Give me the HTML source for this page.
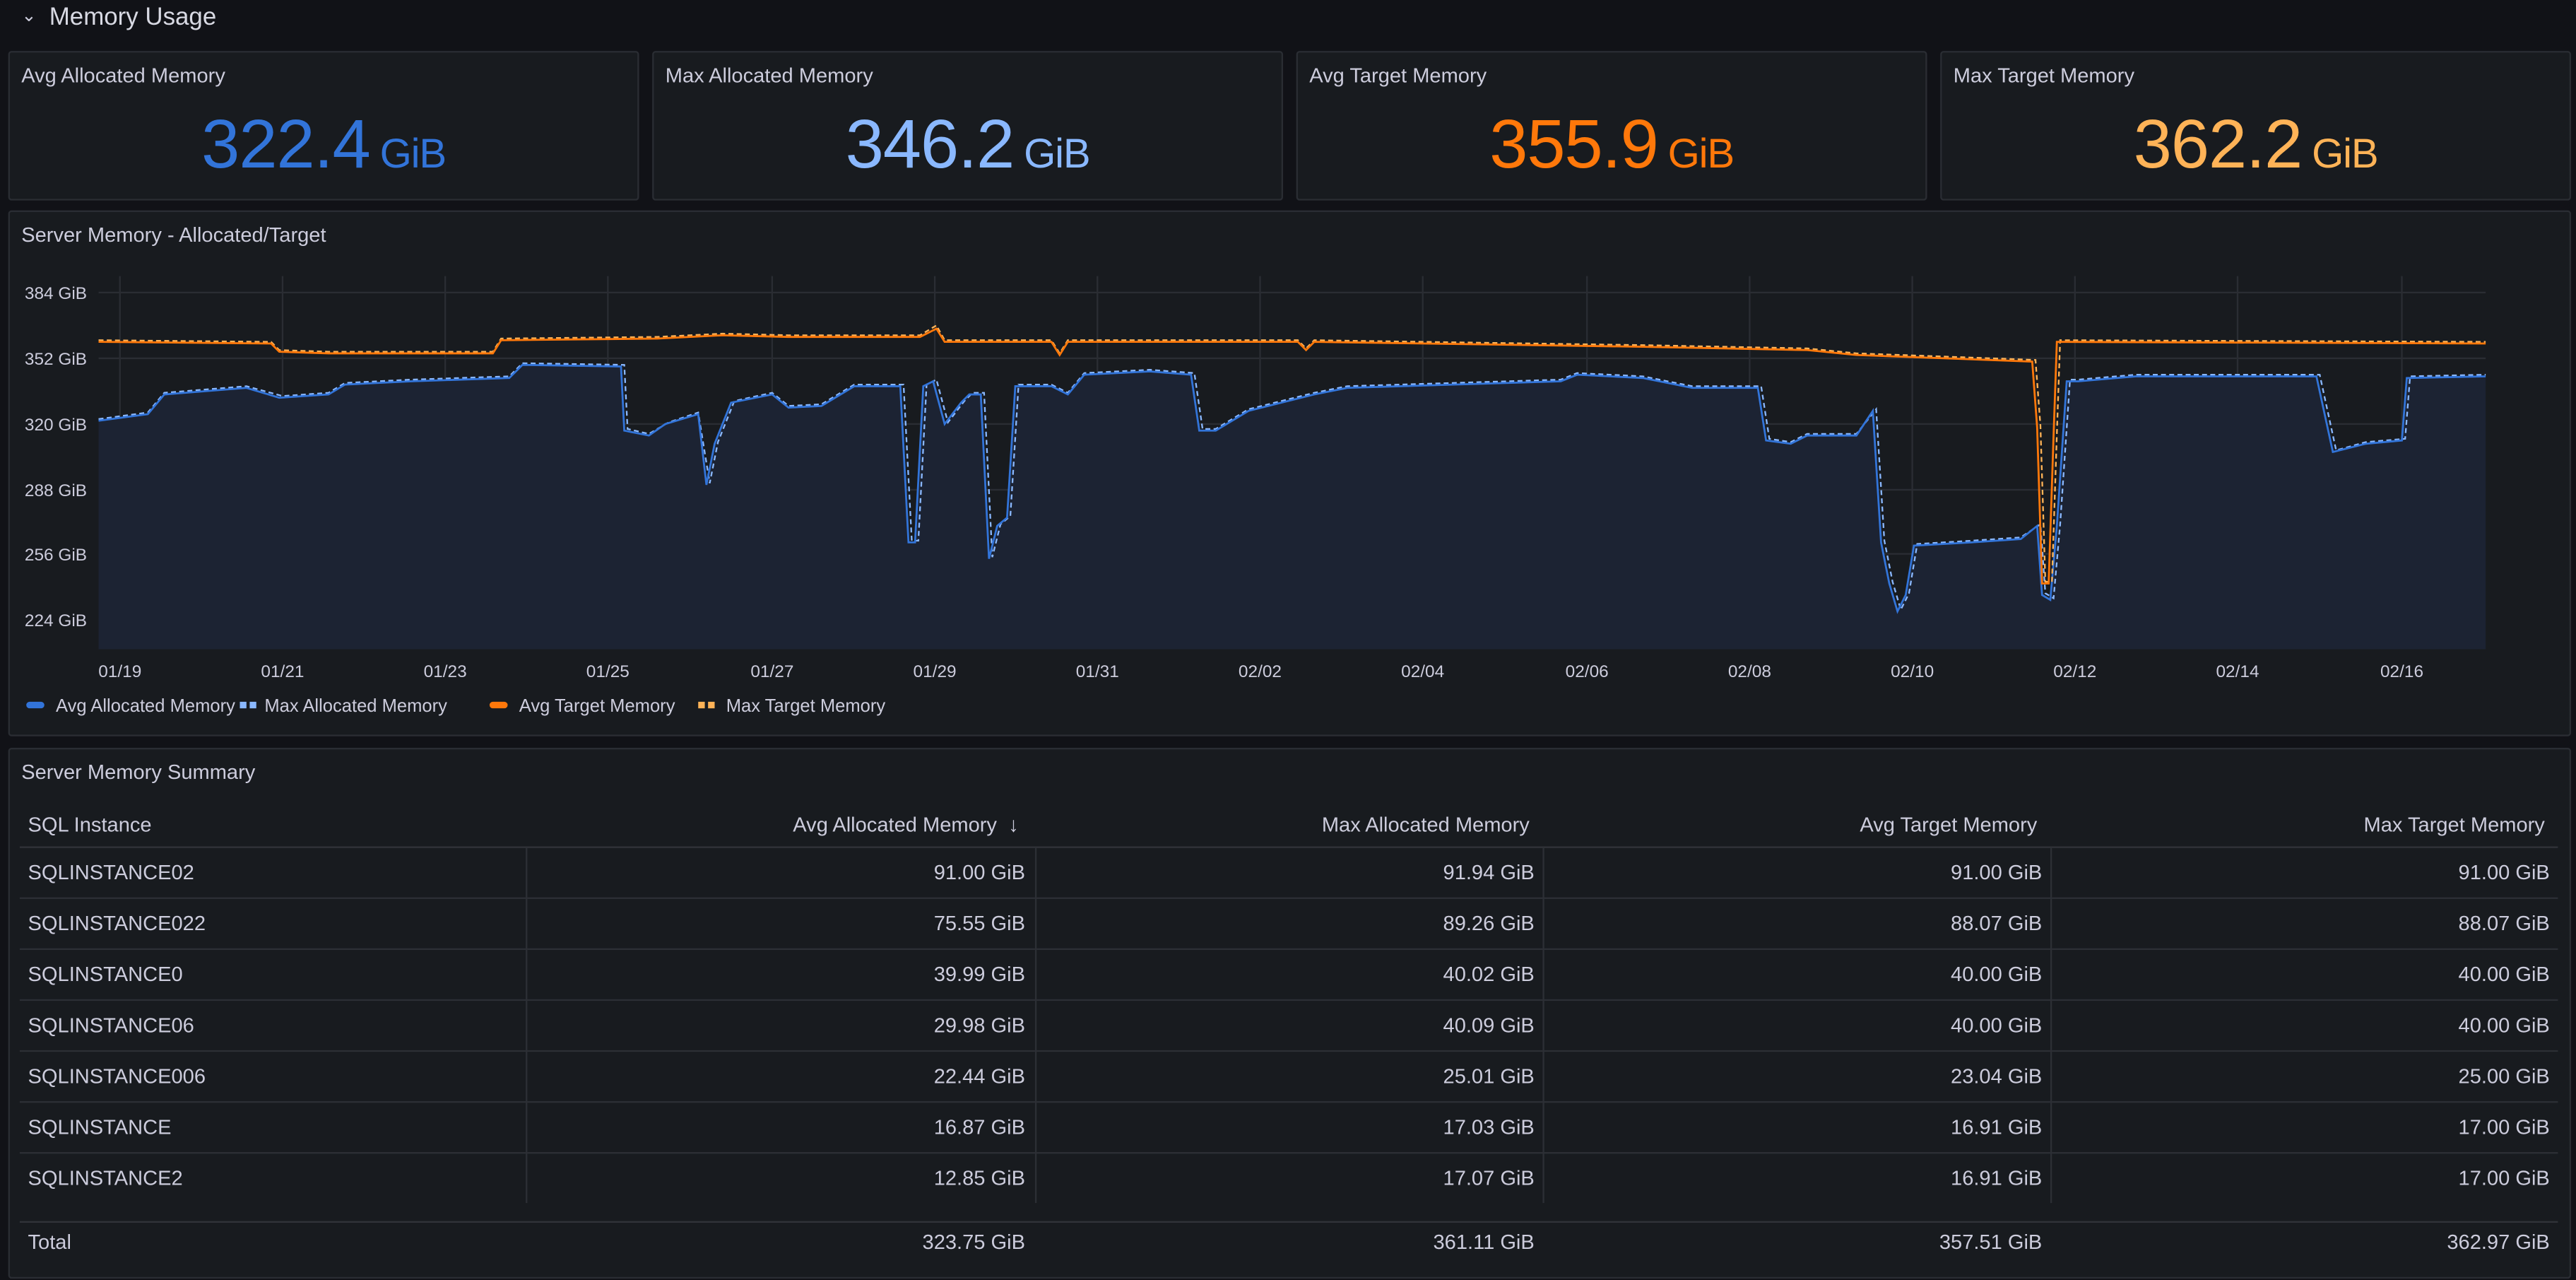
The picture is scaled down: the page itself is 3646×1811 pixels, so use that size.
<!DOCTYPE html>
<html><head><meta charset="utf-8"><style>
html,body{margin:0;padding:0;background:#111217;overflow:hidden;width:3646px;height:1811px}
#w{position:absolute;left:0;top:0;width:1568px;height:779px;transform:scale(2.32526);transform-origin:0 0;font-family:"Liberation Sans",sans-serif;color:#ccccdc}
.a{position:absolute;white-space:nowrap}
.p{position:absolute;background:#181b1f;border:1px solid #2a2d33;border-radius:2px;box-sizing:border-box}
.t{position:absolute;left:7px;top:7px;font-size:12.5px;color:#ccccdc}
.v{position:absolute;left:0;right:0;top:32px;text-align:center;font-size:42px;letter-spacing:-0.5px}
.v small{font-size:25px;margin-left:6px}
.r{position:absolute;font-size:12.5px;text-align:right}
.hl{position:absolute;height:1px;background:#2c2f35}
.vl{position:absolute;width:1px;background:#2c2f35}
</style></head><body><div id="w">
<div class="a" style="left:13px;top:3px;font-size:11px">&#8964;</div>
<div class="a" style="left:30px;top:2px;font-size:15px;color:#d8d9e3">Memory Usage</div>

<div class="p" style="left:5px;top:31px;width:384px;height:91px"><div class="t">Avg Allocated Memory</div><div class="v" style="color:#3274d9">322.4<small>GiB</small></div></div>
<div class="p" style="left:397px;top:31px;width:384px;height:91px"><div class="t">Max Allocated Memory</div><div class="v" style="color:#8ab8ff">346.2<small>GiB</small></div></div>
<div class="p" style="left:789px;top:31px;width:384px;height:91px"><div class="t">Avg Target Memory</div><div class="v" style="color:#ff780a">355.9<small>GiB</small></div></div>
<div class="p" style="left:1181px;top:31px;width:384px;height:91px"><div class="t">Max Target Memory</div><div class="v" style="color:#ffb357">362.2<small>GiB</small></div></div>

<div class="p" style="left:5px;top:128px;width:1560px;height:320px"><div class="t">Server Memory - Allocated/Target</div></div>
<svg class="a" style="left:0;top:0" width="1568" height="779" viewBox="0 0 1568 779">
<g stroke="#2a2d33" stroke-width="1">
<line x1="60" x2="1513" y1="178" y2="178"/><line x1="60" x2="1513" y1="218" y2="218"/><line x1="60" x2="1513" y1="258" y2="258"/><line x1="60" x2="1513" y1="298" y2="298"/><line x1="60" x2="1513" y1="337" y2="337"/><line x1="60" x2="1513" y1="377" y2="377"/>
<line x1="73" x2="73" y1="168" y2="395"/><line x1="172" x2="172" y1="168" y2="395"/><line x1="271" x2="271" y1="168" y2="395"/><line x1="370" x2="370" y1="168" y2="395"/><line x1="470" x2="470" y1="168" y2="395"/><line x1="569" x2="569" y1="168" y2="395"/><line x1="668" x2="668" y1="168" y2="395"/><line x1="767" x2="767" y1="168" y2="395"/><line x1="866" x2="866" y1="168" y2="395"/><line x1="966" x2="966" y1="168" y2="395"/><line x1="1065" x2="1065" y1="168" y2="395"/><line x1="1164" x2="1164" y1="168" y2="395"/><line x1="1263" x2="1263" y1="168" y2="395"/><line x1="1362" x2="1362" y1="168" y2="395"/><line x1="1462" x2="1462" y1="168" y2="395"/>
</g>
<g font-family="Liberation Sans,sans-serif" font-size="10.5" fill="#ccccdc">
<text x="15" y="182">384 GiB</text><text x="15" y="222">352 GiB</text><text x="15" y="262">320 GiB</text><text x="15" y="302">288 GiB</text><text x="15" y="341">256 GiB</text><text x="15" y="381">224 GiB</text>
<g text-anchor="middle"><text x="73" y="412">01/19</text><text x="172" y="412">01/21</text><text x="271" y="412">01/23</text><text x="370" y="412">01/25</text><text x="470" y="412">01/27</text><text x="569" y="412">01/29</text><text x="668" y="412">01/31</text><text x="767" y="412">02/02</text><text x="866" y="412">02/04</text><text x="966" y="412">02/06</text><text x="1065" y="412">02/08</text><text x="1164" y="412">02/10</text><text x="1263" y="412">02/12</text><text x="1362" y="412">02/14</text><text x="1462" y="412">02/16</text></g>
</g>
<polygon fill="#1c2333" points="60,256 90,252 100,240 150,236 170,242 200,240 210,234 250,232 310,230 318,222 378,223 380,262 395,265 405,258 425,252 430,295 435,270 445,245 470,240 480,248 500,247 520,235 548,235 553,330 557,330 562,235 568,232 575,258 585,245 590,240 597,240 602,340 607,320 613,315 618,235 640,235 650,240 660,228 700,226 725,228 730,262 740,262 760,250 800,240 820,236 950,232 960,228 1000,230 1030,236 1070,236 1075,268 1090,270 1100,265 1130,265 1140,250 1145,330 1150,355 1155,372 1160,362 1165,332 1200,330 1230,328 1240,320 1243,362 1248,365 1252,320 1258,232 1265,232 1300,229 1410,229 1420,275 1440,270 1462,268 1465,230 1513,229 1513,395 60,395"/>
<polyline fill="none" stroke="#8ab8ff" stroke-width="1" stroke-dasharray="3,2" points="60,255 90,251 100,239 150,235 172,241 200,239 210,233 250,231 310,229 318,221 380,222 382,261 395,264 407,257 425,251 432,294 437,269 447,244 470,239 480,247 500,246 520,234 550,234 555,329 559,329 564,234 570,231 577,257 587,244 592,239 599,239 604,339 609,319 615,314 620,234 640,234 650,239 660,227 700,225 727,227 732,261 740,261 760,249 800,239 820,235 950,231 960,227 1000,229 1030,235 1072,235 1077,267 1090,269 1100,264 1130,264 1142,249 1147,329 1152,354 1157,371 1162,361 1167,331 1200,329 1230,327 1242,319 1245,361 1250,364 1254,319 1260,231 1265,231 1300,228 1412,228 1422,274 1440,269 1464,267 1467,229 1513,228"/>
<polyline fill="none" stroke="#3274d9" stroke-width="1.2" points="60,256 90,252 100,240 150,236 170,242 200,240 210,234 250,232 310,230 318,222 378,223 380,262 395,265 405,258 425,252 430,295 435,270 445,245 470,240 480,248 500,247 520,235 548,235 553,330 557,330 562,235 568,232 575,258 585,245 590,240 597,240 602,340 607,320 613,315 618,235 640,235 650,240 660,228 700,226 725,228 730,262 740,262 760,250 800,240 820,236 950,232 960,228 1000,230 1030,236 1070,236 1075,268 1090,270 1100,265 1130,265 1140,250 1145,330 1150,355 1155,372 1160,362 1165,332 1200,330 1230,328 1240,320 1243,362 1248,365 1252,320 1258,232 1265,232 1300,229 1410,229 1420,275 1440,270 1462,268 1465,230 1513,229"/>
<polyline fill="none" stroke="#ffb357" stroke-width="1" stroke-dasharray="3,2" points="60,207 165,208 170,213 200,214 300,214 305,206 400,205 440,203 480,204 560,204 570,198 575,207 640,207 645,215 650,207 790,207 795,212 800,207 1000,210 1100,212 1130,215 1239,219 1242,259 1245,354 1249,354 1252,264 1254,207 1513,208"/>
<polyline fill="none" stroke="#ff780a" stroke-width="1.2" points="60,208 165,209 170,214 200,215 300,215 305,207 400,206 440,204 480,205 560,205 570,200 575,208 640,208 645,216 650,208 790,208 795,213 800,208 1000,211 1100,213 1130,216 1237,220 1240,260 1243,355 1247,355 1250,265 1252,208 1513,209"/>
<g font-family="Liberation Sans,sans-serif" font-size="11" fill="#ccccdc">
<rect x="16" y="427" width="11" height="4" rx="2" fill="#3274d9"/><text x="34" y="433">Avg Allocated Memory</text>
<rect x="146" y="427" width="4" height="4" fill="#8ab8ff"/><rect x="152" y="427" width="4" height="4" fill="#8ab8ff"/><text x="161" y="433">Max Allocated Memory</text>
<rect x="298" y="427" width="11" height="4" rx="2" fill="#ff780a"/><text x="316" y="433">Avg Target Memory</text>
<rect x="425" y="427" width="4" height="4" fill="#ffb357"/><rect x="431" y="427" width="4" height="4" fill="#ffb357"/><text x="442" y="433">Max Target Memory</text>
</g>
</svg>

<div class="p" style="left:5px;top:455px;width:1560px;height:323px"><div class="t">Server Memory Summary</div></div>
<div class="a" style="left:17px;top:495px;font-size:12.5px">SQL Instance</div>
<div class="r" style="right:948px;top:495px">Avg Allocated Memory &nbsp;&#8595;</div>
<div class="r" style="right:637px;top:495px">Max Allocated Memory</div>
<div class="r" style="right:328px;top:495px">Avg Target Memory</div>
<div class="r" style="right:19px;top:495px">Max Target Memory</div>
<div class="hl" style="left:12px;width:1545px;top:515px;background:#303338"></div>
<div class="hl" style="left:12px;width:1545px;top:546px"></div>
<div class="hl" style="left:12px;width:1545px;top:577px"></div>
<div class="hl" style="left:12px;width:1545px;top:608px"></div>
<div class="hl" style="left:12px;width:1545px;top:639px"></div>
<div class="hl" style="left:12px;width:1545px;top:670px"></div>
<div class="hl" style="left:12px;width:1545px;top:701px"></div>
<div class="hl" style="left:12px;width:1545px;top:743px;background:#303338"></div>
<div class="vl" style="left:320px;top:516px;height:216px"></div>
<div class="vl" style="left:630px;top:516px;height:216px"></div>
<div class="vl" style="left:939px;top:516px;height:216px"></div>
<div class="vl" style="left:1248px;top:516px;height:216px"></div>
<div style="position:absolute;left:0;top:516px;width:1568px;font-size:12.5px;line-height:31px">
<div style="position:relative;height:31px"><span class="a" style="left:17px">SQLINSTANCE02</span><span class="r" style="right:944px">91.00 GiB</span><span class="r" style="right:634px">91.94 GiB</span><span class="r" style="right:325px">91.00 GiB</span><span class="r" style="right:16px">91.00 GiB</span></div>
<div style="position:relative;height:31px"><span class="a" style="left:17px">SQLINSTANCE022</span><span class="r" style="right:944px">75.55 GiB</span><span class="r" style="right:634px">89.26 GiB</span><span class="r" style="right:325px">88.07 GiB</span><span class="r" style="right:16px">88.07 GiB</span></div>
<div style="position:relative;height:31px"><span class="a" style="left:17px">SQLINSTANCE0</span><span class="r" style="right:944px">39.99 GiB</span><span class="r" style="right:634px">40.02 GiB</span><span class="r" style="right:325px">40.00 GiB</span><span class="r" style="right:16px">40.00 GiB</span></div>
<div style="position:relative;height:31px"><span class="a" style="left:17px">SQLINSTANCE06</span><span class="r" style="right:944px">29.98 GiB</span><span class="r" style="right:634px">40.09 GiB</span><span class="r" style="right:325px">40.00 GiB</span><span class="r" style="right:16px">40.00 GiB</span></div>
<div style="position:relative;height:31px"><span class="a" style="left:17px">SQLINSTANCE006</span><span class="r" style="right:944px">22.44 GiB</span><span class="r" style="right:634px">25.01 GiB</span><span class="r" style="right:325px">23.04 GiB</span><span class="r" style="right:16px">25.00 GiB</span></div>
<div style="position:relative;height:31px"><span class="a" style="left:17px">SQLINSTANCE</span><span class="r" style="right:944px">16.87 GiB</span><span class="r" style="right:634px">17.03 GiB</span><span class="r" style="right:325px">16.91 GiB</span><span class="r" style="right:16px">17.00 GiB</span></div>
<div style="position:relative;height:31px"><span class="a" style="left:17px">SQLINSTANCE2</span><span class="r" style="right:944px">12.85 GiB</span><span class="r" style="right:634px">17.07 GiB</span><span class="r" style="right:325px">16.91 GiB</span><span class="r" style="right:16px">17.00 GiB</span></div>
</div>
<div style="position:absolute;left:0;top:741px;width:1568px;height:31px;font-size:12.5px;line-height:31px">
<span class="a" style="left:17px">Total</span><span class="r" style="right:944px">323.75 GiB</span><span class="r" style="right:634px">361.11 GiB</span><span class="r" style="right:325px">357.51 GiB</span><span class="r" style="right:16px">362.97 GiB</span></div>
</div></body></html>
